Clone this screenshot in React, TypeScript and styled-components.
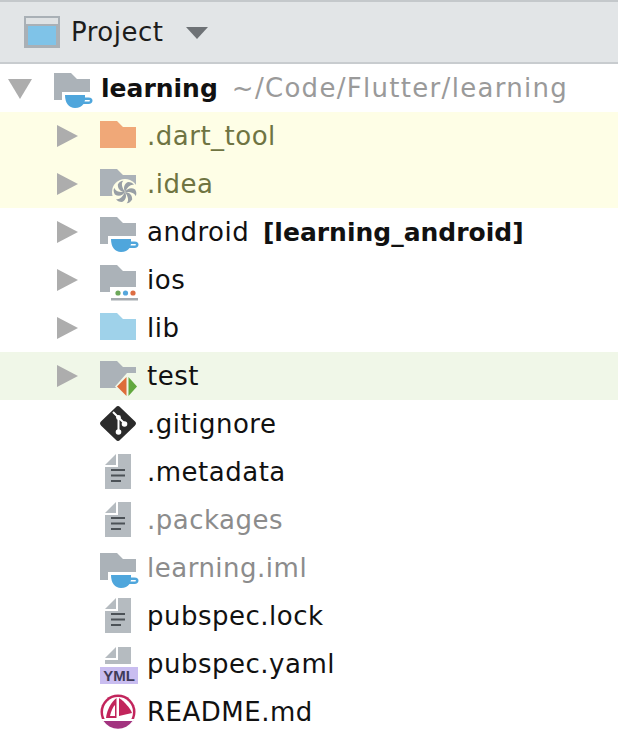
import type { ReactNode } from 'react';
import styled, { createGlobalStyle } from 'styled-components';

const GlobalStyle = createGlobalStyle`
  html, body {
    margin: 0;
    background: #ffffff;
  }
`;

const Panel = styled.div`
  width: 618px;
  height: 740px;
  overflow: hidden;
  font-family: "DejaVu Sans", "Open Sans", sans-serif;
  font-size: 26px;
  letter-spacing: 0.5px;
  color: #111111;
`;

const Header = styled.div`
  height: 60px;
  display: flex;
  align-items: center;
  padding-left: 24px;
  background: #e2e5e7;
  border-top: 2px solid #c4c8cb;
  border-bottom: 2px solid #c8cccf;
`;

const HeaderTitle = styled.span`
  margin-left: 11px;
  color: #1c1c1c;
`;

const HeaderCaret = styled.span`
  width: 0;
  height: 0;
  margin-left: 23px;
  margin-top: 2px;
  border-left: 11px solid transparent;
  border-right: 11px solid transparent;
  border-top: 12px solid #6e7276;
`;

const Row = styled.div<{ $depth: number; $tint?: 'yellow' | 'green' }>`
  height: 48px;
  display: flex;
  align-items: center;
  padding-left: ${(p) => (p.$depth === 0 ? 8 : 57)}px;
  background: ${(p) => (p.$tint === 'yellow' ? '#fefee6' : p.$tint === 'green' ? '#f0f7e8' : 'transparent')};
`;

const ArrowSlot = styled.span<{ $depth: number }>`
  width: ${(p) => (p.$depth === 0 ? 24 : 21)}px;
  margin-right: 22px;
  flex: none;
  display: flex;
`;

const ArrowRight = styled.span`
  width: 0;
  height: 0;
  border-top: 11px solid transparent;
  border-bottom: 11px solid transparent;
  border-left: 21px solid #adadad;
`;

const ArrowDown = styled.span`
  width: 0;
  height: 0;
  margin-top: 2px;
  border-left: 12px solid transparent;
  border-right: 12px solid transparent;
  border-top: 20px solid #adadad;
`;

const IconBox = styled.svg`
  width: 40px;
  height: 48px;
  flex: none;
  display: block;
`;

const Label = styled.span<{ $tone?: 'olive' | 'muted' }>`
  margin-left: 7px;
  white-space: nowrap;
  color: ${(p) => (p.$tone === 'olive' ? '#6f7442' : p.$tone === 'muted' ? '#8c8c8c' : '#111111')};
`;

const Strong = styled.b`
  font-size: 25px;
  font-weight: 700;
  letter-spacing: 0;
`;

const ModuleTag = styled(Strong)`
  margin-left: 5px;
`;

const PathHint = styled.span`
  margin-left: 14px;
  letter-spacing: 1.3px;
  color: #9a9a9a;
`;

const GREY = '#abb2b8';
const FOLDER = 'M0 9H17L23 15H36V36H0Z';

const Cup = () => (
  <>
    <rect x="8" y="28" width="32" height="20" fill="#ffffff" />
    <path d="M11 31H31V33.5H34.5C37.5 33.5 38.5 35 38.5 36.5C38.5 38.5 37 40 34.5 40H29.5C27.5 42.5 25 44 21 44C15 44 11 39 11 31Z" fill="#4fa6dc" />
    <path d="M31 36H34.5C35.5 36 36 36.2 36 36.8C36 37.3 35.5 37.6 34.5 37.6H30.5Z" fill="#ffffff" />
  </>
);

const Swirl = () => (
  <>
    <circle cx="25" cy="32" r="13" fill="#fefee6" />
    {[0, 60, 120, 180, 240, 300].map((angle) => (
      <path
        key={angle}
        d="M25 32C23 28 24 24 28 22C31 22 33 23 34 25C31 24 28 26 25 32Z"
        fill="#989fa5"
        transform={`rotate(${angle} 25 32)`}
      />
    ))}
  </>
);

const icons: Record<string, ReactNode> = {
  moduleFolder: (
    <>
      <path d={FOLDER} fill={GREY} />
      <Cup />
    </>
  ),
  excluded: <path d={FOLDER} fill="#f0a878" />,
  idea: (
    <>
      <path d={FOLDER} fill={GREY} />
      <Swirl />
    </>
  ),
  ios: (
    <>
      <path d={FOLDER} fill={GREY} />
      <rect x="10" y="31" width="30" height="17" fill="#ffffff" />
      <circle cx="18" cy="37" r="2.6" fill="#6da85a" />
      <circle cx="25.5" cy="37" r="2.6" fill="#55a7dc" />
      <circle cx="33" cy="37" r="2.6" fill="#dd6d42" />
      <rect x="11" y="42" width="27" height="2.5" fill="#a6abb0" />
    </>
  ),
  source: <path d={FOLDER} fill="#9fd2ea" />,
  test: (
    <>
      <path d={FOLDER} fill={GREY} />
      <path d="M27 21L15 34.5L27 48H40V21Z" fill="#f0f7e8" />
      <path d="M26.5 25V44L17 34.5Z" fill="#dd6d3a" />
      <path d="M28.5 25V44L37 34.5Z" fill="#62a83e" />
    </>
  ),
  git: (
    <>
      <path d="M15.8 7.2a3 3 0 0 1 4.4 0L34.8 21.3a3 3 0 0 1 0 4.4L20.2 39.8a3 3 0 0 1-4.4 0L1.2 25.7a3 3 0 0 1 0-4.4Z" fill="#2b2b2b" />
      <path d="M13 12L24 23M18.5 17.5V31" stroke="#ffffff" strokeWidth="2" fill="none" />
      <circle cx="18.5" cy="32" r="2.8" fill="#ffffff" />
      <circle cx="18.5" cy="17.5" r="2.4" fill="#ffffff" />
      <circle cx="24.5" cy="24" r="2.8" fill="#ffffff" />
    </>
  ),
  file: (
    <>
      <path d="M5 17L16 6V17Z" fill="#b5bbc0" />
      <path d="M18 6H31V41H5V19H18Z" fill="#b5bbc0" />
      <path d="M11 22H25M11 27.5H25M11 33H21" stroke="#4c5257" strokeWidth="2" />
    </>
  ),
  yaml: (
    <>
      <path d="M5 18L16 7V18Z" fill="#b5bbc0" />
      <path d="M18 7H31V24H5V20H18Z" fill="#b5bbc0" />
      <rect x="0" y="27" width="38" height="17" fill="#c9bdf0" />
      <text x="19" y="41" textAnchor="middle" fontFamily="Liberation Sans" fontWeight="700" fontSize="15" letterSpacing="0" fill="#3f3b58">
        YML
      </text>
    </>
  ),
  readme: (
    <>
      <circle cx="18" cy="24" r="17.5" fill="#c2255c" />
      <circle cx="18" cy="24" r="15" fill="#ffffff" />
      <path d="M6 30C7 22 11 14 16.5 10V30Z" fill="#c2255c" />
      <path d="M10 28C11 23 13 19 15 17V28Z" fill="#ffffff" />
      <path d="M19 10C25 14 30 20 32 25L19 28Z" fill="#c2255c" />
      <path d="M1.5 31H34.5A17.5 17.5 0 0 1 1.5 31Z" fill="#ffffff" />
      <path d="M3.5 33H32.5A17.5 17.5 0 0 1 3.5 33Z" fill="#a2337f" />
    </>
  ),
};

type TreeRow = {
  depth: number;
  icon: string;
  arrow?: 'right' | 'down';
  tint?: 'yellow' | 'green';
  tone?: 'olive' | 'muted';
  label: ReactNode;
};

const rows: TreeRow[] = [
  {
    depth: 0,
    icon: 'moduleFolder',
    arrow: 'down',
    label: (
      <>
        <Strong>learning</Strong>
        <PathHint>~/Code/Flutter/learning</PathHint>
      </>
    ),
  },
  { depth: 1, icon: 'excluded', arrow: 'right', tint: 'yellow', tone: 'olive', label: '.dart_tool' },
  { depth: 1, icon: 'idea', arrow: 'right', tint: 'yellow', tone: 'olive', label: '.idea' },
  {
    depth: 1,
    icon: 'moduleFolder',
    arrow: 'right',
    label: (
      <>
        android <ModuleTag>[learning_android]</ModuleTag>
      </>
    ),
  },
  { depth: 1, icon: 'ios', arrow: 'right', label: 'ios' },
  { depth: 1, icon: 'source', arrow: 'right', label: 'lib' },
  { depth: 1, icon: 'test', arrow: 'right', tint: 'green', label: 'test' },
  { depth: 1, icon: 'git', label: '.gitignore' },
  { depth: 1, icon: 'file', label: '.metadata' },
  { depth: 1, icon: 'file', tone: 'muted', label: '.packages' },
  { depth: 1, icon: 'moduleFolder', tone: 'muted', label: 'learning.iml' },
  { depth: 1, icon: 'file', label: 'pubspec.lock' },
  { depth: 1, icon: 'yaml', label: 'pubspec.yaml' },
  { depth: 1, icon: 'readme', label: 'README.md' },
];

export default function App() {
  return (
    <Panel>
      <GlobalStyle />
      <Header>
        <svg width="36" height="32" viewBox="0 0 36 32">
          <rect width="36" height="32" fill="#a9b0b6" />
          <rect x="2" y="2" width="32" height="6" fill="#dfe2e4" />
          <rect x="4" y="10" width="28" height="19" fill="#7fc3e8" />
        </svg>
        <HeaderTitle>Project</HeaderTitle>
        <HeaderCaret />
      </Header>
      {rows.map((row, index) => (
        <Row key={index} $depth={row.depth} $tint={row.tint}>
          <ArrowSlot $depth={row.depth}>
            {row.arrow === 'right' ? <ArrowRight /> : row.arrow === 'down' ? <ArrowDown /> : null}
          </ArrowSlot>
          <IconBox viewBox="0 0 40 48">{icons[row.icon]}</IconBox>
          <Label $tone={row.tone}>{row.label}</Label>
        </Row>
      ))}
    </Panel>
  );
}
